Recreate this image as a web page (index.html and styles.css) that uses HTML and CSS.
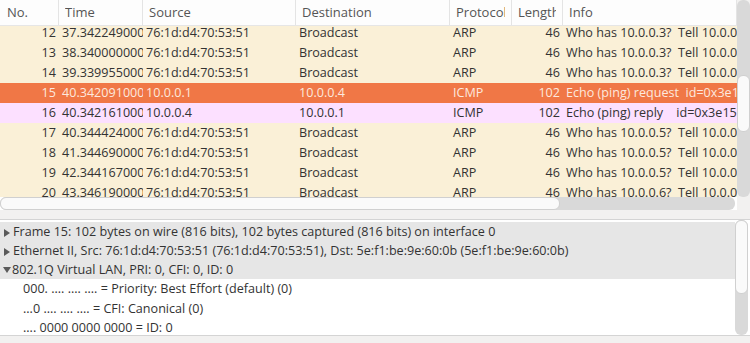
FILE: index.html
```html
<!DOCTYPE html>
<html>

<head>
    <meta charset="UTF-8">
    <title>Packets</title>
    <link rel="stylesheet" href="styles.css">
</head>

<body>
    <div class="packets">
        <div class="list">
            <div class="row head">
                <div class="cell"><span class="label">No.</span></div>
                <div class="cell"><span class="label">Time</span></div>
                <div class="cell"><span class="label">Source</span></div>
                <div class="cell"><span class="label">Destination</span></div>
                <div class="cell"><span class="label">Protocol</span></div>
                <div class="cell"><span class="label">Length</span></div>
                <div class="cell"><span class="label">Info</span></div>
            </div>
            <div class="viewport">
                <div class="rows">
                    <div class="row arp"><div class="cell num">12</div><div class="cell">37.342249000</div><div class="cell">76:1d:d4:70:53:51</div><div class="cell">Broadcast</div><div class="cell">ARP</div><div class="cell num">46</div><div class="cell">Who has 10.0.0.3?&nbsp; Tell 10.0.0.1</div></div>
                    <div class="row arp"><div class="cell num">13</div><div class="cell">38.340000000</div><div class="cell">76:1d:d4:70:53:51</div><div class="cell">Broadcast</div><div class="cell">ARP</div><div class="cell num">46</div><div class="cell">Who has 10.0.0.3?&nbsp; Tell 10.0.0.1</div></div>
                    <div class="row arp"><div class="cell num">14</div><div class="cell">39.339955000</div><div class="cell">76:1d:d4:70:53:51</div><div class="cell">Broadcast</div><div class="cell">ARP</div><div class="cell num">46</div><div class="cell">Who has 10.0.0.3?&nbsp; Tell 10.0.0.1</div></div>
                    <div class="row selected"><div class="cell num">15</div><div class="cell">40.342091000</div><div class="cell">10.0.0.1</div><div class="cell">10.0.0.4</div><div class="cell">ICMP</div><div class="cell num">102</div><div class="cell">Echo (ping) request&nbsp; id=0x3e15</div></div>
                    <div class="row icmp"><div class="cell num">16</div><div class="cell">40.342161000</div><div class="cell">10.0.0.4</div><div class="cell">10.0.0.1</div><div class="cell">ICMP</div><div class="cell num">102</div><div class="cell">Echo (ping) reply&nbsp;&nbsp;&nbsp; id=0x3e15</div></div>
                    <div class="row arp"><div class="cell num">17</div><div class="cell">40.344424000</div><div class="cell">76:1d:d4:70:53:51</div><div class="cell">Broadcast</div><div class="cell">ARP</div><div class="cell num">46</div><div class="cell">Who has 10.0.0.5?&nbsp; Tell 10.0.0.1</div></div>
                    <div class="row arp"><div class="cell num">18</div><div class="cell">41.344690000</div><div class="cell">76:1d:d4:70:53:51</div><div class="cell">Broadcast</div><div class="cell">ARP</div><div class="cell num">46</div><div class="cell">Who has 10.0.0.5?&nbsp; Tell 10.0.0.1</div></div>
                    <div class="row arp"><div class="cell num">19</div><div class="cell">42.344167000</div><div class="cell">76:1d:d4:70:53:51</div><div class="cell">Broadcast</div><div class="cell">ARP</div><div class="cell num">46</div><div class="cell">Who has 10.0.0.5?&nbsp; Tell 10.0.0.1</div></div>
                    <div class="row arp"><div class="cell num">20</div><div class="cell">43.346190000</div><div class="cell">76:1d:d4:70:53:51</div><div class="cell">Broadcast</div><div class="cell">ARP</div><div class="cell num">46</div><div class="cell">Who has 10.0.0.6?&nbsp; Tell 10.0.0.1</div></div>
                </div>
            </div>
            <div class="hscroll"><div class="hthumb"></div></div>
        </div>
        <div class="vbar">
            <div class="vscroll top-scroll"><div class="vthumb"></div></div>
            <div class="corner"></div>
        </div>
    </div>

    <div class="splitter"></div>

    <div class="details">
        <div class="tree">
            <div class="node shaded"><span class="arrow closed"></span>Frame 15: 102 bytes on wire (816 bits), 102 bytes captured (816 bits) on interface 0</div>
            <div class="node shaded"><span class="arrow closed"></span>Ethernet II, Src: 76:1d:d4:70:53:51 (76:1d:d4:70:53:51), Dst: 5e:f1:be:9e:60:0b (5e:f1:be:9e:60:0b)</div>
            <div class="node shaded"><span class="arrow open"></span>802.1Q Virtual LAN, PRI: 0, CFI: 0, ID: 0</div>
            <div class="node child">000. .... .... .... = Priority: Best Effort (default) (0)</div>
            <div class="node child">...0 .... .... .... = CFI: Canonical (0)</div>
            <div class="node child">.... 0000 0000 0000 = ID: 0</div>
        </div>
        <div class="vscroll detail-scroll"><div class="vthumb"></div></div>
    </div>
    <div class="statusgap"></div>
</body>

</html>
```

FILE: styles.css
```css
body {
    margin: 0;
    padding: 0;
    background-color: #f2f1f0;
    font-family: "Open Sans", sans-serif;
    font-size: 12.6px;
    color: #333;
    width: 750px;
    height: 343px;
    overflow: hidden;
}

.packets {
    display: flex;
    height: 210px;
}

.list {
    width: 737px;
    display: flex;
    flex-direction: column;
    background-color: #fff;
}

.row {
    display: grid;
    grid-template-columns: 59px 84px 153px 154px 62px 51px 174px;
    height: 20px;
    line-height: 20px;
}

.cell {
    overflow: hidden;
    white-space: nowrap;
    padding: 0 3px;
}

.cell.num {
    text-align: right;
    padding-right: 3px;
}

.head {
    height: 26px;
    line-height: 25px;
    font-size: 13px;
    color: #555;
    background-color: #fdfdfd;
    border-bottom: 1px solid #e6e6e6;
    box-sizing: border-box;
}

.head .cell {
    padding: 0 6px;
    border-right: 1px solid #e4e4e4;
}

.head .cell:first-child {
    padding-left: 7px;
}

/* header text is clipped inside the padding, like the Qt header */
.label {
    display: block;
    overflow: hidden;
}

.viewport {
    height: 171px;
    overflow: hidden;
}

.rows {
    margin-top: -3px;
}

.arp {
    background-color: #faf0d7;
}

.icmp {
    background-color: #fce0ff;
}

.selected {
    background-color: #f07746;
    color: #fde8de;
}

.hscroll {
    height: 13px;
    background-color: #d9d9d9;
    border-radius: 6px;
    margin-right: 2px;
    display: flex;
}

.hthumb {
    width: 560px;
    background-color: #fafafa;
    border: 1px solid #d0d0d0;
    border-radius: 6px;
    box-sizing: border-box;
}

.vbar {
    width: 13px;
    display: flex;
    flex-direction: column;
}

.vscroll {
    width: 13px;
    background-color: #d9d9d9;
    border-radius: 6px;
    box-sizing: border-box;
}

.top-scroll {
    height: 197px;
    padding-top: 75px;
}

.vthumb {
    height: 55px;
    background-color: #fafafa;
    border: 1px solid #d0d0d0;
    border-radius: 6px;
}

.corner {
    flex: 1;
    background-color: #f2f1f0;
}

.splitter {
    height: 9px;
}

.details {
    display: flex;
    height: 117px;
    border-top: 1px solid #d4d4d4;
    border-bottom: 1px solid #d4d4d4;
    background-color: #fff;
    padding-right: 2px;
    box-sizing: border-box;
}

.tree {
    width: 735px;
    overflow: hidden;
    padding-top: 2px;
}

.node {
    height: 19px;
    line-height: 19px;
    white-space: nowrap;
    padding-left: 4px;
}

.node.shaded {
    background-color: #e6e6e6;
}

.node.child {
    padding-left: 23px;
    height: 19.5px;
    line-height: 20px;
}

.arrow {
    display: inline-block;
    width: 0;
    height: 0;
    margin-right: 3px;
    vertical-align: -1px;
}

.arrow.closed {
    border-top: 4.5px solid transparent;
    border-bottom: 4.5px solid transparent;
    border-left: 6px solid #5a5a5a;
}

.arrow.open {
    border-left: 4.5px solid transparent;
    border-right: 4.5px solid transparent;
    border-top: 6px solid #5a5a5a;
    margin-right: 1px;
    margin-left: -1px;
    vertical-align: 1px;
}

.detail-scroll {
    height: 115px;
}

.detail-scroll .vthumb {
    height: 72px;
}

.statusgap {
    height: 7px;
}
```
